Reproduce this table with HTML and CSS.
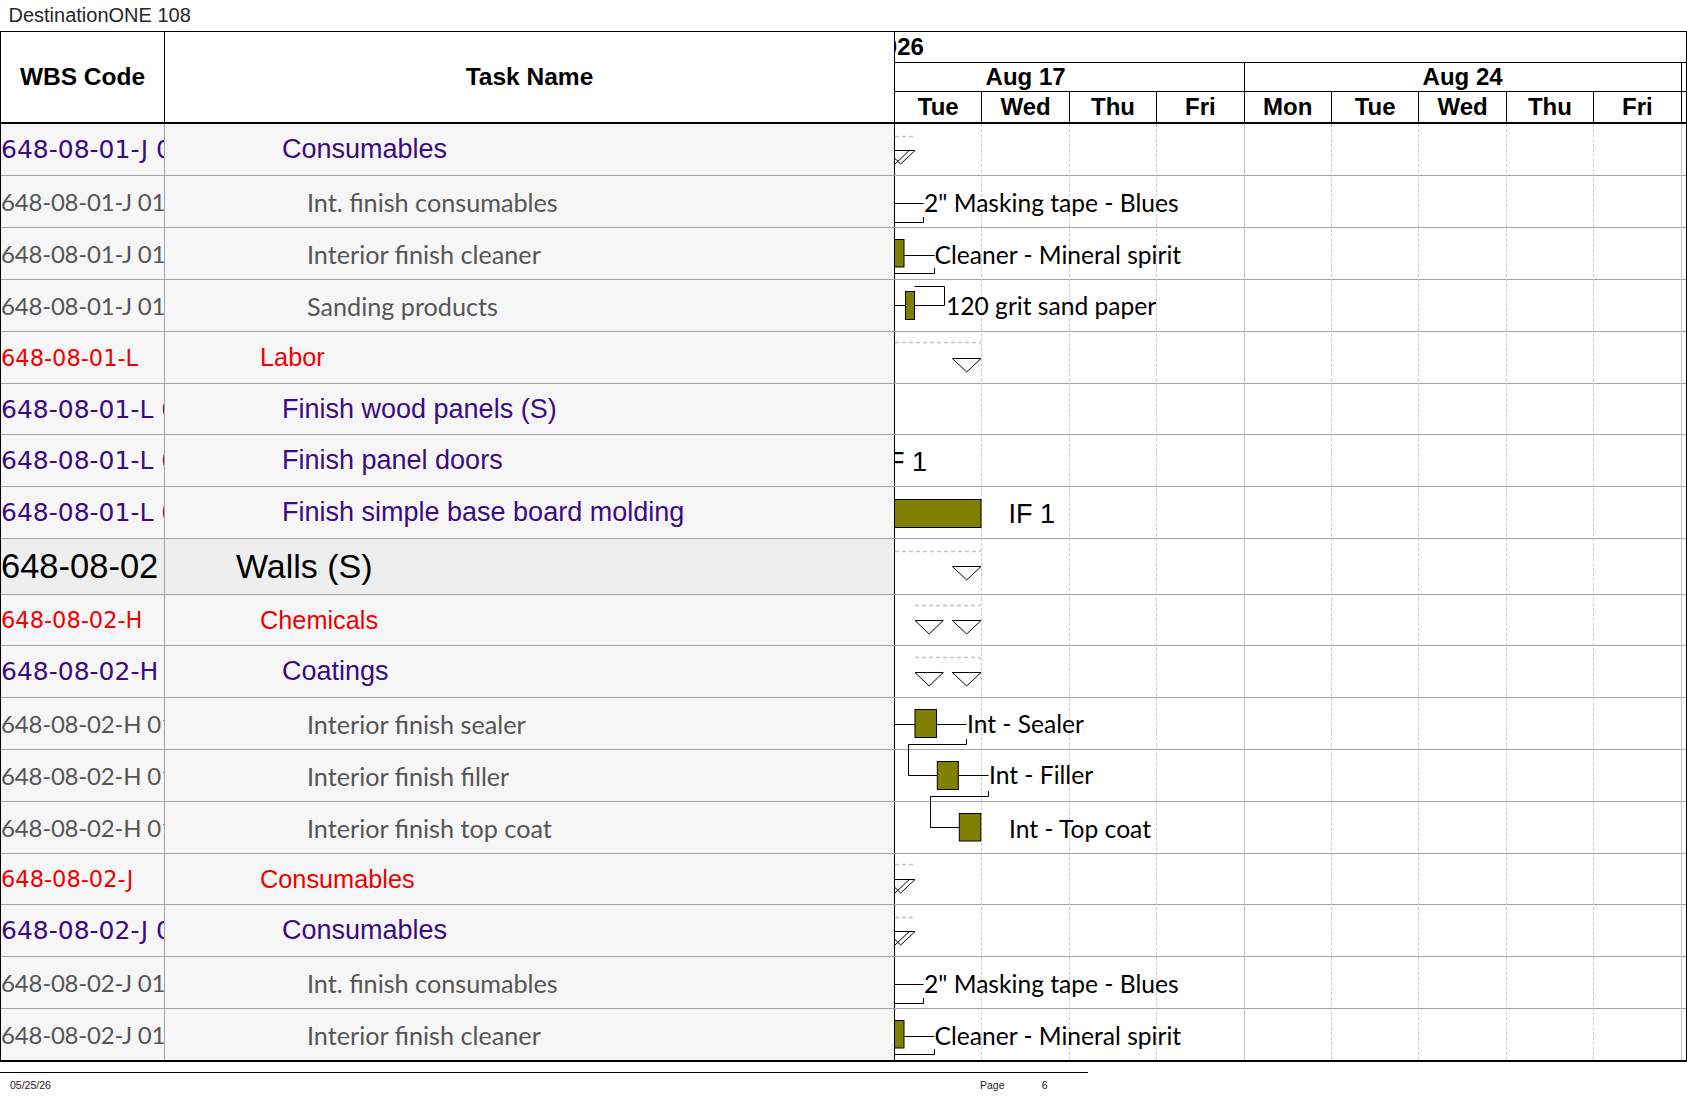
FILE: index.html
```html
<!DOCTYPE html>
<html>
<head>
<meta charset="utf-8">
<title>DestinationONE 108</title>
<link rel="stylesheet" href="styles.css">
</head>
<body>
<div class="title">DestinationONE 108</div>
<div class="sheet">
  <div class="head">
    <div class="hcode">WBS Code</div>
    <div class="htask">Task Name</div>
    <div class="hgantt">
      <div class="hyear"><span class="yr">2026</span></div>
      <div class="hweeks">
        <div class="wk wk1">Aug 17</div>
        <div class="wk wk2">Aug 24</div>
        <div class="hstrip"></div>
      </div>
      <div class="hdays">
        <div class="day">Tue</div><div class="day">Wed</div><div class="day">Thu</div><div class="day">Fri</div>
        <div class="day">Mon</div><div class="day">Tue</div><div class="day">Wed</div><div class="day">Thu</div><div class="day">Fri</div>
        <div class="hstrip"></div>
      </div>
    </div>
  </div>
  <div class="body">
    <div class="row p"><div class="code">648-08-01-J 01</div><div class="task">Consumables</div></div>
    <div class="row g"><div class="code">648-08-01-J 01 01</div><div class="task">Int. finish consumables</div></div>
    <div class="row g"><div class="code">648-08-01-J 01 02</div><div class="task">Interior finish cleaner</div></div>
    <div class="row g"><div class="code">648-08-01-J 01 03</div><div class="task">Sanding products</div></div>
    <div class="row r"><div class="code">648-08-01-L</div><div class="task">Labor</div></div>
    <div class="row p s"><div class="code">648-08-01-L 01</div><div class="task">Finish wood panels (S)</div></div>
    <div class="row p"><div class="code">648-08-01-L 02</div><div class="task">Finish panel doors</div></div>
    <div class="row p"><div class="code">648-08-01-L 03</div><div class="task">Finish simple base board molding</div></div>
    <div class="row w"><div class="code">648-08-02</div><div class="task">Walls (S)</div></div>
    <div class="row r s"><div class="code">648-08-02-H</div><div class="task">Chemicals</div></div>
    <div class="row p"><div class="code">648-08-02-H 01</div><div class="task">Coatings</div></div>
    <div class="row g"><div class="code">648-08-02-H 01 01</div><div class="task">Interior finish sealer</div></div>
    <div class="row g"><div class="code">648-08-02-H 01 02</div><div class="task">Interior finish filler</div></div>
    <div class="row g"><div class="code">648-08-02-H 01 03</div><div class="task">Interior finish top coat</div></div>
    <div class="row r s"><div class="code">648-08-02-J</div><div class="task">Consumables</div></div>
    <div class="row p"><div class="code">648-08-02-J 01</div><div class="task">Consumables</div></div>
    <div class="row g"><div class="code">648-08-02-J 01 01</div><div class="task">Int. finish consumables</div></div>
    <div class="row g s last"><div class="code">648-08-02-J 01 02</div><div class="task">Interior finish cleaner</div></div>

    <div class="gantt-layer">
      <div class="daygrid">
        <div class="dcol"></div><div class="dcol"></div><div class="dcol"></div><div class="dcol wkend"></div>
        <div class="dcol"></div><div class="dcol"></div><div class="dcol"></div><div class="dcol"></div><div class="dcol wkend"></div>
      </div>
      <svg class="bars" width="791" height="936" viewBox="0 0 791 936">
        <!-- row 1 -->
        <line class="dash" x1="0" y1="12.5" x2="21" y2="12.5"/>
        <polygon class="tri" points="-14.3,26.5 14.3,26.5 0,40"/>
        <polygon class="tri" points="-8.5,26.5 20,26.5 5.7,40"/>
        <!-- row 2 -->
        <path class="ln" d="M0 79.5 H28.5"/>
        <text class="lbl" x="29" y="87.5">2" Masking tape - Blues</text>
        <path class="ln" d="M0 98.5 H28.5 V93"/>
        <!-- row 3 -->
        <rect class="bar" x="-1" y="115.5" width="10" height="27.5"/>
        <path class="ln" d="M9 131.5 H39.5"/>
        <text class="lbl" x="39.5" y="139.5">Cleaner - Mineral spirit</text>
        <path class="ln" d="M0 149.5 H39.5 V144"/>
        <!-- row 4 -->
        <path class="ln" d="M0 181.5 H10.5"/>
        <rect class="bar" x="10.5" y="167.5" width="9" height="28"/>
        <path class="ln" d="M19.5 181.5 H49.5 V162.5 H19.5"/>
        <text class="lbl" x="51" y="190.5">120 grit sand paper</text>
        <!-- row 5 -->
        <line class="dash" x1="0" y1="218.5" x2="86" y2="218.5"/>
        <polygon class="tri" points="57.3,234.5 86,234.5 71.7,248"/>
        <!-- row 7 -->
        <text class="if" x="-14.5" y="347">IF 1</text>
        <!-- row 8 -->
        <rect class="bar" x="-1" y="375.5" width="87" height="28"/>
        <text class="if" x="113.5" y="399">IF 1</text>
        <!-- row 9 -->
        <line class="dash" x1="0" y1="427.5" x2="86" y2="427.5"/>
        <polygon class="tri" points="57.3,442.5 86,442.5 71.7,456"/>
        <!-- row 10 -->
        <line class="dash" x1="20" y1="481.5" x2="86" y2="481.5"/>
        <polygon class="tri" points="20,496.5 48.3,496.5 34.2,510"/>
        <polygon class="tri" points="57.3,496.5 86,496.5 71.7,510"/>
        <!-- row 11 -->
        <line class="dash" x1="20" y1="533.5" x2="86" y2="533.5"/>
        <polygon class="tri" points="20,548.5 48.3,548.5 34.2,562"/>
        <polygon class="tri" points="57.3,548.5 86,548.5 71.7,562"/>
        <!-- row 12 -->
        <path class="ln" d="M0 600.5 H20"/>
        <rect class="bar" x="20" y="585.5" width="21.5" height="28"/>
        <path class="ln" d="M41.5 600.5 H71.5"/>
        <text class="lbl" x="72" y="609">Int - Sealer</text>
        <path class="ln" d="M71.5 615 V620.5 H13.5 V651.5 H42.3"/>
        <!-- row 13 -->
        <rect class="bar" x="42.3" y="637.5" width="21" height="28"/>
        <path class="ln" d="M63.3 651.5 H93.5"/>
        <text class="lbl" x="94" y="660">Int - Filler</text>
        <path class="ln" d="M93.5 667 V672.5 H35.5 V703.5 H64.3"/>
        <!-- row 14 -->
        <rect class="bar" x="64.3" y="689.5" width="21.5" height="27.5"/>
        <text class="lbl" x="114" y="713.5">Int - Top coat</text>
        <!-- row 15 -->
        <line class="dash" x1="0" y1="740.5" x2="21" y2="740.5"/>
        <polygon class="tri" points="-14.3,755.5 14.3,755.5 0,769"/>
        <polygon class="tri" points="-8.5,755.5 20,755.5 5.7,769"/>
        <!-- row 16 -->
        <line class="dash" x1="0" y1="793.5" x2="21" y2="793.5"/>
        <polygon class="tri" points="-14.3,807.5 14.3,807.5 0,821"/>
        <polygon class="tri" points="-8.5,807.5 20,807.5 5.7,821"/>
        <!-- row 17 -->
        <path class="ln" d="M0 860.5 H28.5"/>
        <text class="lbl" x="29" y="868.5">2" Masking tape - Blues</text>
        <path class="ln" d="M0 879.5 H28.5 V874"/>
        <!-- row 18 -->
        <rect class="bar" x="-1" y="896.5" width="10" height="27.5"/>
        <path class="ln" d="M9 912.5 H39.5"/>
        <text class="lbl" x="39.5" y="920.5">Cleaner - Mineral spirit</text>
        <path class="ln" d="M0 930.5 H39.5 V925"/>
      </svg>
    </div>
  </div>
</div>
<div class="footer">
  <span class="fdate">05/25/26</span><span class="fpage">Page</span><span class="fnum">6</span>
</div>
</body>
</html>
```

FILE: styles.css
```css
html, body {
  margin: 0;
  padding: 0;
  background: #ffffff;
}
body {
  font-family: "Liberation Sans", Arial, sans-serif;
  color: #000;
  width: 1687px;
}
.title {
  height: 31px;
  line-height: 31px;
  padding-left: 8.5px;
  font-family: "Liberation Sans", Arial, sans-serif;
  font-size: 20px;
  color: #262626;
  white-space: nowrap;
}
.sheet {
  box-sizing: border-box;
  width: 1687px;
  border: 1px solid #000;
  border-bottom-width: 2px;
}
/* ---------- header ---------- */
.head {
  box-sizing: border-box;
  display: flex;
  height: 92px;
  border-bottom: 2px solid #000;
  font-weight: bold;
}
.hcode, .htask {
  box-sizing: border-box;
  display: flex;
  align-items: center;
  justify-content: center;
  border-right: 1px solid #000;
  font-size: 24.5px;
}
.hcode { width: 164px; }
.htask { width: 730px; }
.hgantt {
  flex: 1;
  display: flex;
  flex-direction: column;
  font-size: 24px;
  min-width: 0;
}
.hyear {
  box-sizing: border-box;
  height: 31px;
  line-height: 30px;
  border-bottom: 1px solid #000;
  overflow: hidden;
  white-space: nowrap;
}
.yr {
  display: inline-block;
  margin-left: -24.5px;
}
.hweeks {
  box-sizing: border-box;
  display: flex;
  height: 29px;
  border-bottom: 1px solid #000;
}
.wk {
  box-sizing: border-box;
  flex: none;
  border-right: 1px solid #000;
  text-align: center;
  line-height: 28px;
  white-space: nowrap;
  overflow: hidden;
}
.wk1 { width: 349.6px; padding-right: 87.4px; }
.wk2 { width: 437px; }
.hstrip { flex: 1; }
.hdays {
  display: flex;
  flex: 1;
}
.day {
  box-sizing: border-box;
  flex: none;
  width: 87.4px;
  border-right: 1px solid #000;
  text-align: center;
  line-height: 30px;
}
/* ---------- body ---------- */
.body {
  position: relative;
}
.row {
  box-sizing: border-box;
  display: flex;
  height: 52px;
  border-bottom: 1px solid #a3a3a3;
}
.row.s { height: 51px; }
.row.w { height: 56px; }
.row.last { border-bottom: none; }
.code, .task {
  box-sizing: border-box;
  display: flex;
  align-items: center;
  overflow: hidden;
  white-space: nowrap;
  background: #f6f6f6;
}
.code {
  width: 164px;
  border-right: 1px solid #a3a3a3;
}
.task {
  width: 730px;
  border-right: 1px solid #000;
}
.row.w .code, .row.w .task { background: #eeeeee; }

/* purple summary rows */
.row.p { color: #3c0a82; }
.row.p .code {
  font-family: "DejaVu Sans", sans-serif;
  font-size: 25px;
}
.row.p .task {
  font-family: "Liberation Sans", Arial, sans-serif;
  font-size: 27px;
  padding-left: 117px;
}
/* red rows */
.row.r { color: #f00000; }
.row.r .code {
  font-family: "DejaVu Sans", sans-serif;
  font-size: 22.5px;
}
.row.r .task {
  font-family: "Liberation Sans", Arial, sans-serif;
  font-size: 25.3px;
  padding-left: 95px;
}
/* gray task rows */
.row.g { color: #555555; }
.row.g .code, .row.g .task {
  font-family: Lato, "Open Sans", sans-serif;
  font-size: 25.2px;
}
.row.g .code {
  font-size: 24px;
  letter-spacing: -0.2px;
}
.row.g .task { padding-left: 142px; }
/* walls row */
.row.w { color: #000; }
.row.w .code {
  font-family: "Liberation Sans", Arial, sans-serif;
  font-size: 34.5px;
}
.row.w .task {
  font-family: "Liberation Sans", Arial, sans-serif;
  font-size: 34px;
  padding-left: 71px;
}

/* ---------- gantt chart layer ---------- */
.gantt-layer {
  position: absolute;
  top: 0;
  left: 894px;
  width: 791px;
  height: 100%;
  overflow: hidden;
  pointer-events: none;
}
.daygrid {
  display: flex;
  height: 100%;
}
.dcol {
  box-sizing: border-box;
  flex: none;
  width: 87.4px;
  height: 100%;
  border-right: 1px dashed #c9c9c9;
}
.dcol.wkend { border-right: 1px solid #c4c4c4; }
.bars {
  position: absolute;
  top: 0;
  left: 0;
  overflow: hidden;
}
.ln {
  fill: none;
  stroke: #000;
  stroke-width: 1;
}
.dash {
  stroke: #c4c4c4;
  stroke-width: 1.5;
  stroke-dasharray: 4 3;
}
.tri {
  fill: none;
  stroke: #000;
  stroke-width: 1;
}
.bar {
  fill: #808000;
  stroke: #000;
  stroke-width: 1;
}
.lbl {
  font-family: Lato, "Open Sans", sans-serif;
  font-size: 24.6px;
  fill: #000;
}
.if {
  font-family: "Liberation Sans", Arial, sans-serif;
  font-size: 27px;
  fill: #000;
}

/* ---------- footer ---------- */
.footer {
  box-sizing: border-box;
  width: 1088px;
  margin-top: 10px;
  border-top: 1px solid #000;
  height: 25px;
  line-height: 24px;
  font-family: "Liberation Sans", Arial, sans-serif;
  font-size: 10.5px;
  color: #222;
  display: flex;
  white-space: nowrap;
}
.fdate { width: 980px; padding-left: 10px; box-sizing: border-box; }
.fpage { width: 61.7px; }
```
